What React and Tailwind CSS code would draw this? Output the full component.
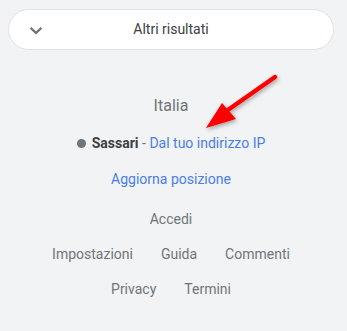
import React from 'react';

const FooterLink = ({ children }) => (
  <a className="text-[14px] leading-5 text-[#70757a]">{children}</a>
);

export default function App() {
  return (
    <div className="relative w-[347px] h-[331px] bg-[#f1f3f4] overflow-hidden font-['Roboto',sans-serif]">
      <div className="w-[342px]">
        {/* More results button */}
        <div className="pt-[9px] px-2">
          <button className="relative flex items-center justify-center w-full h-[41px] rounded-full bg-white border border-[#dfe1e5] text-[14px] text-[#3c4043]">
            <svg className="absolute left-[17px] top-[10px]" width="20" height="20" viewBox="0 0 24 24">
              <path d="M5.5 9.5l6.5 6 6.5-6" fill="none" stroke="#70757a" strokeWidth="2.6" />
            </svg>
            Altri risultati
          </button>
        </div>

        {/* Location */}
        <div className="flex flex-col items-center">
          <div className="mt-[44px] text-[16px] leading-6 text-[#70757a]">Italia</div>
          <div className="mt-[15px] flex items-center text-[14px] leading-5">
            <span className="w-[9px] h-[9px] rounded-full bg-[#70757a] mr-[6px]" />
            <span className="font-bold text-[#3c4043]">Sassari</span>
            <span className="text-[#70757a]">&nbsp;-&nbsp;</span>
            <span className="text-[#4a7ee6]">Dal tuo indirizzo IP</span>
          </div>
          <div className="mt-4 text-[14px] leading-5 text-[#4a7ee6]">Aggiorna posizione</div>
        </div>

        {/* Footer */}
        <div className="flex flex-col items-center mt-[20px] gap-[15px]">
          <FooterLink>Accedi</FooterLink>
          <div className="flex gap-7">
            <FooterLink>Impostazioni</FooterLink>
            <FooterLink>Guida</FooterLink>
            <FooterLink>Commenti</FooterLink>
          </div>
          <div className="flex gap-7">
            <FooterLink>Privacy</FooterLink>
            <FooterLink>Termini</FooterLink>
          </div>
        </div>
      </div>

      {/* Red annotation arrow */}
      <svg className="absolute left-0 top-0 pointer-events-none" width="347" height="331">
        <defs>
          <filter id="sh" x="-20%" y="-20%" width="140%" height="140%">
            <feDropShadow dx="1" dy="2" stdDeviation="2" floodColor="#000" floodOpacity="0.35" />
          </filter>
        </defs>
        <g filter="url(#sh)">
          <line x1="275" y1="77" x2="225" y2="112" stroke="#ff0000" strokeWidth="4.5" strokeLinecap="round" />
          <polygon points="206,128 222,103 236,119" fill="#ff0000" />
        </g>
      </svg>
    </div>
  );
}
